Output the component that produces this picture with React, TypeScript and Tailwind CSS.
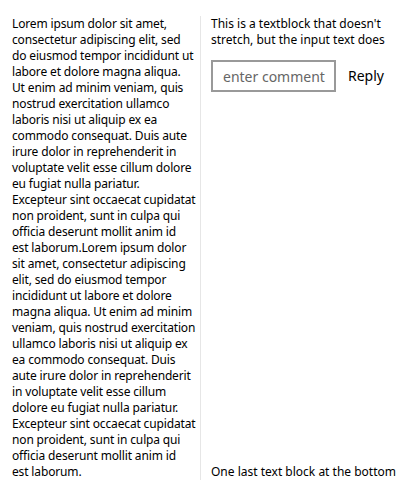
const lines = [
  "Lorem ipsum dolor sit amet,",
  "consectetur adipiscing elit, sed",
  "do eiusmod tempor incididunt ut",
  "labore et dolore magna aliqua.",
  "Ut enim ad minim veniam, quis",
  "nostrud exercitation ullamco",
  "laboris nisi ut aliquip ex ea",
  "commodo consequat. Duis aute",
  "irure dolor in reprehenderit in",
  "voluptate velit esse cillum dolore",
  "eu fugiat nulla pariatur.",
  "Excepteur sint occaecat cupidatat",
  "non proident, sunt in culpa qui",
  "officia deserunt mollit anim id",
  "est laborum.Lorem ipsum dolor",
  "sit amet, consectetur adipiscing",
  "elit, sed do eiusmod tempor",
  "incididunt ut labore et dolore",
  "magna aliqua. Ut enim ad minim",
  "veniam, quis nostrud exercitation",
  "ullamco laboris nisi ut aliquip ex",
  "ea commodo consequat. Duis",
  "aute irure dolor in reprehenderit",
  "in voluptate velit esse cillum",
  "dolore eu fugiat nulla pariatur.",
  "Excepteur sint occaecat cupidatat",
  "non proident, sunt in culpa qui",
  "officia deserunt mollit anim id",
  "est laborum.",
];

export default function App() {
  return (
    <div
      className="w-[400px] h-[495px] bg-white text-black flex pt-4 pb-[15px] pl-3 text-[12px] leading-4"
      style={{ fontFamily: '"Noto Sans", sans-serif' }}
    >
      <div className="w-[188px] shrink-0">
        <p className="whitespace-nowrap tracking-[-0.15px]">
          {lines.map((l, i) => (
            <span key={i}>
              {l}
              {i < lines.length - 1 && <br />}
            </span>
          ))}
        </p>
      </div>
      <div className="flex-1 border-l border-[#e6e6e6] pl-[10px] flex flex-col">
        <p className="w-[180px]">This is a textblock that doesn't stretch, but the input text does</p>
        <div className="flex items-center mt-3">
          <input
            type="text"
            placeholder="enter comment"
            className="w-[125px] h-8 border-2 border-[#999999] pl-[10px] pr-0 text-[14px] leading-5 text-black placeholder:text-[#666666] outline-none bg-white"
            style={{ fontFamily: '"Noto Sans", sans-serif' }}
          />
          <span className="ml-3 text-[14px] leading-5">Reply</span>
        </div>
        <p className="mt-auto whitespace-nowrap">One last text block at the bottom</p>
      </div>
    </div>
  );
}
